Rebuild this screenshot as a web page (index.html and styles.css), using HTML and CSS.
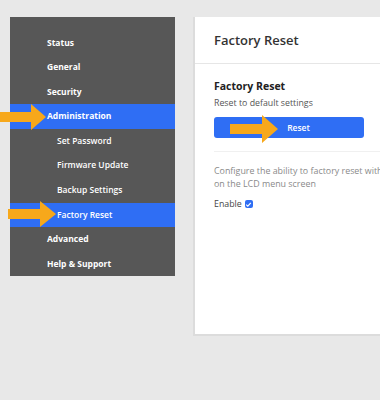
FILE: index.html
```html
<!DOCTYPE html>
<html lang="en">
<head>
    <meta charset="UTF-8">
    <meta name="viewport" content="width=device-width, initial-scale=1.0">
    <title>Factory Reset</title>
    <link rel="stylesheet" href="styles.css">
</head>
<body>
    <div class="page">
        <nav class="sidebar">
            <a class="nav-item">Status</a>
            <a class="nav-item">General</a>
            <a class="nav-item">Security</a>
            <a class="nav-item active">Administration</a>
            <a class="nav-item sub">Set Password</a>
            <a class="nav-item sub">Firmware Update</a>
            <a class="nav-item sub">Backup Settings</a>
            <a class="nav-item sub active">Factory Reset</a>
            <a class="nav-item">Advanced</a>
            <a class="nav-item">Help &amp; Support</a>
        </nav>

        <section class="card">
            <div class="card-header">Factory Reset</div>
            <div class="card-body">
                <h2 class="section-title">Factory Reset</h2>
                <p class="section-desc">Reset to default settings</p>
                <button class="reset-btn">Reset</button>
                <div class="divider"></div>
                <p class="config-text">Configure the ability to factory reset with the button on the LCD menu screen</p>
                <label class="enable">Enable <span class="check"><svg width="7" height="7" viewBox="0 0 7 7"><path d="M1.2 3.6 L2.8 5.1 L5.8 1.8" fill="none" stroke="#fff" stroke-width="1.2"/></svg></span></label>
            </div>
        </section>

        <!-- annotation arrows -->
        <svg class="arrow arrow-admin" width="46" height="28" viewBox="0 0 46 28"><polygon points="0,9 31,9 31,1 46,14 31,27 31,19 0,19" fill="#f7a81b"/></svg>
        <svg class="arrow arrow-reset" width="48" height="28" viewBox="0 0 48 28"><polygon points="0,9 32,9 32,1 48,14 32,27 32,19 0,19" fill="#f7a81b"/></svg>
        <svg class="arrow arrow-btn" width="48" height="30" viewBox="0 0 48 30"><polygon points="0,10 32,10 32,1 48,15 32,29 32,20 0,20" fill="#f7a81b"/></svg>
    </div>
</body>
</html>
```

FILE: styles.css
```css
* {
    box-sizing: border-box;
}
body {
    margin: 0;
    background: #e8e8e8;
    font-family: "Open Sans", "Noto Sans", sans-serif;
    overflow: hidden;
}
.page {
    position: relative;
    display: flex;
    align-items: flex-start;
    gap: 18px;
    padding: 17px 0 0 10px;
    height: 400px;
}
.sidebar {
    width: 165px;
    flex-shrink: 0;
    background: #575757;
    padding: 13.5px 0 0;
    display: flex;
    flex-direction: column;
}
.nav-item {
    height: 24.6px;
    line-height: 24.6px;
    padding-left: 37px;
    color: #fff;
    font-size: 8.5px;
    font-weight: 700;
}
.nav-item.sub {
    padding-left: 47px;
    font-weight: 600;
}
.nav-item.active {
    background: #2f6ef4;
}
.card {
    flex: 1;
    min-width: 200px;
    height: 319px;
    background: #fff;
    border-left: 2px solid #dcdcdc;
    border-bottom: 2px solid #dcdcdc;
    overflow: hidden;
}
.card-header {
    height: 47px;
    padding-left: 19px;
    line-height: 47px;
    font-size: 13px;
    font-weight: 600;
    color: #333;
    border-bottom: 1px solid #e6e6e6;
}
.card-body {
    padding: 14px 0 0 19px;
}
.section-title {
    margin: 0;
    font-size: 10.5px;
    font-weight: 700;
    color: #222;
    line-height: 16px;
}
.section-desc {
    margin: 3px 0 0;
    font-size: 8.8px;
    color: #555;
    line-height: 12px;
}
.reset-btn {
    display: block;
    margin-top: 8px;
    width: 150px;
    height: 21px;
    border: none;
    border-radius: 3px;
    background: #2f6ef4;
    color: #fff;
    font-family: inherit;
    font-size: 8.5px;
    font-weight: 600;
    padding-left: 25px;
}
.divider {
    margin-top: 13px;
    height: 1px;
    background: #f0f0f0;
}
.config-text {
    margin: 12px 0 0;
    width: 220px;
    font-size: 8.9px;
    line-height: 13px;
    color: #8a8a8a;
}
.enable {
    display: flex;
    align-items: center;
    gap: 3px;
    margin-top: 8px;
    font-size: 8.8px;
    color: #444;
}
.check {
    width: 8px;
    height: 8px;
    border-radius: 2px;
    background: #2f6ef4;
    display: flex;
    align-items: center;
    justify-content: center;
}
.arrow {
    position: absolute;
}
.arrow-admin {
    left: 0;
    top: 103px;
}
.arrow-reset {
    left: 8px;
    top: 200px;
}
.arrow-btn {
    left: 230px;
    top: 114px;
}
```
